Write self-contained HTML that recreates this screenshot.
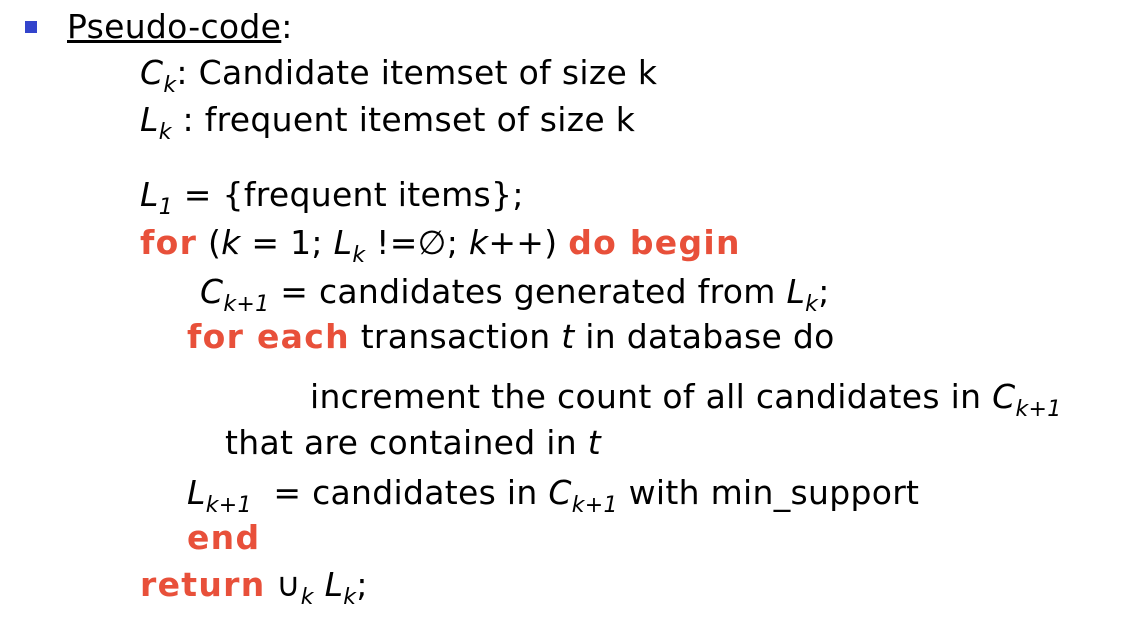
<!DOCTYPE html>
<html><head><meta charset="utf-8"><style>
body{margin:0;width:1128px;height:628px;background:#fff;position:relative;overflow:hidden;font-family:"DejaVu Sans","Liberation Sans",sans-serif;color:#000;}
.l{position:absolute;white-space:nowrap;font-size:33px;line-height:40px;letter-spacing:0.3px}
.r{color:#e8503a;font-weight:bold;letter-spacing:1.3px}
i{font-style:italic}
sub{font-size:22px;vertical-align:-8px;line-height:0;font-style:italic}
</style></head><body>
<div style="position:absolute;left:25px;top:21px;width:12px;height:12px;background:#3344cc"></div>
<div class="l" style="left:67px;top:7px"><u>Pseudo-code</u>:</div>
<div class="l" style="left:140px;top:53px"><i>C<sub>k</sub></i>: Candidate itemset of size k</div>
<div class="l" style="left:140px;top:100px"><i>L<sub>k</sub></i> : frequent itemset of size k</div>
<div class="l" style="left:140px;top:175px"><i>L<sub>1</sub></i> = {frequent items};</div>
<div class="l" style="left:140px;top:223px"><span class="r">for</span> (<i>k</i> = 1; <i>L<sub>k</sub></i> !=∅; <i>k</i>++) <span class="r">do begin</span></div>
<div class="l" style="left:200px;top:272px"><i>C<sub>k+1</sub></i> = candidates generated from <i>L<sub>k</sub></i>;</div>
<div class="l" style="left:187px;top:317px"><span class="r">for each</span> transaction <i>t</i> in database do</div>
<div class="l" style="left:310px;top:377px">increment the count of all candidates in <i>C<sub>k+1</sub></i></div>
<div class="l" style="left:225px;top:423px">that are contained in <i>t</i></div>
<div class="l" style="left:187px;top:473px"><i>L<sub>k+1</sub></i> &nbsp;= candidates in <i>C<sub>k+1</sub></i> with min_support</div>
<div class="l" style="left:187px;top:518px"><span class="r">end</span></div>
<div class="l" style="left:140px;top:565px"><span class="r">return</span> ∪<sub>k</sub> <i>L<sub>k</sub></i>;</div>
</body></html>
